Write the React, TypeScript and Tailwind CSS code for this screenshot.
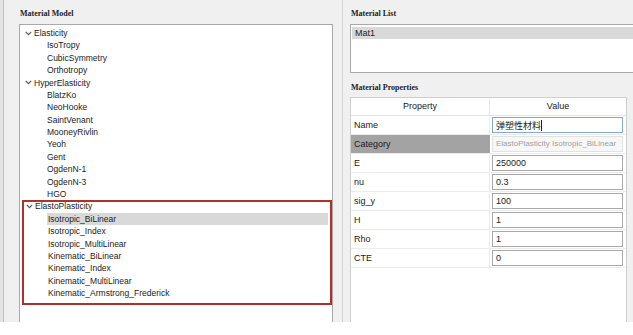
import React from "react";

const tree: { label: string; level: number; open?: boolean }[] = [
  { label: "Elasticity", level: 0, open: true },
  { label: "IsoTropy", level: 1 },
  { label: "CubicSymmetry", level: 1 },
  { label: "Orthotropy", level: 1 },
  { label: "HyperElasticity", level: 0, open: true },
  { label: "BlatzKo", level: 1 },
  { label: "NeoHooke", level: 1 },
  { label: "SaintVenant", level: 1 },
  { label: "MooneyRivlin", level: 1 },
  { label: "Yeoh", level: 1 },
  { label: "Gent", level: 1 },
  { label: "OgdenN-1", level: 1 },
  { label: "OgdenN-3", level: 1 },
  { label: "HGO", level: 1 },
];

const plastic = [
  "Isotropic_BiLinear",
  "Isotropic_Index",
  "Isotropic_MultiLinear",
  "Kinematic_BiLinear",
  "Kinematic_Index",
  "Kinematic_MultiLinear",
  "Kinematic_Armstrong_Frederick",
];

const props: [string, string][] = [
  ["E", "250000"],
  ["nu", "0.3"],
  ["sig_y", "100"],
  ["H", "1"],
  ["Rho", "1"],
  ["CTE", "0"],
];

const sans = { fontFamily: '"Liberation Sans", "Noto Sans CJK SC", sans-serif' };
const serif = { fontFamily: '"Liberation Serif", "Noto Sans CJK SC", serif' };

function Chevron() {
  return (
    <svg width="7" height="5" viewBox="0 0 7 5" className="shrink-0">
      <polyline points="0.8,0.8 3.5,3.6 6.2,0.8" fill="none" stroke="#555" strokeWidth="1.1" />
    </svg>
  );
}

function Row({ label, level, open }: { label: string; level: number; open?: boolean }) {
  if (level === 0) {
    return (
      <div className="h-[12.4px] flex items-center pl-[4px] text-[8.5px] text-[#222] leading-none">
        <span className="w-[9px] flex items-center">{open && <Chevron />}</span>
        <span>{label}</span>
      </div>
    );
  }
  return (
    <div className="h-[12.4px] flex items-center pl-[25px] pr-[2px] text-[8.5px] text-[#222] leading-none">
      <span className="h-full flex-1 flex items-center pl-[1px]">{label}</span>
    </div>
  );
}

export default function App() {
  return (
    <div className="w-[633px] h-[335px] bg-white overflow-hidden" style={sans}>
      <div className="h-[322px] flex bg-[#f0f0f0]">
        {/* left edge strip */}
        <div className="w-[6px] h-full flex shrink-0">
          <div className="w-[3px] bg-[#e4e4e4]" />
          <div className="w-[1px] bg-[#b8c4d4]" />
          <div className="w-[2px] bg-[#eeeeee]" />
        </div>

        {/* left panel */}
        <div className="w-[327px] shrink-0 flex flex-col pl-[13px]">
          <div className="h-[24px] flex items-center pl-[1px] pt-[4px] text-[8px] font-bold text-[#222]" style={serif}>
            Material Model
          </div>
          <div className="flex-1 bg-white border border-b-0 border-[#a9a9a9] pt-[2px] pl-[1px]">
            {tree.map((t) => (
              <Row key={t.label} {...t} />
            ))}
            <div className="border-2 border-[#b0302f] ml-[1px] pb-[3px]">
              <div className="-ml-[2px] -mt-[2px]">
                <div className="h-[12.4px] flex items-center pl-[4px] text-[8.5px] text-[#222] leading-none">
                  <span className="w-[9px] flex items-center"><Chevron /></span>
                  <span>ElastoPlasticity</span>
                </div>
                {plastic.map((p, i) => (
                  <div key={p} className="h-[12.4px] flex items-center pl-[25px] pr-[2px] text-[8.5px] text-[#222] leading-none">
                    <span className={`h-full flex-1 flex items-center pl-[1px] ${i === 0 ? "bg-[#d9d9d9]" : ""}`}>{p}</span>
                  </div>
                ))}
              </div>
            </div>
          </div>
        </div>

        {/* splitter */}
        <div className="w-[17px] h-full flex shrink-0">
          <div className="w-[9px]" />
          <div className="w-[1px] bg-[#d4d4d4]" />
          <div className="w-[7px]" />
        </div>

        {/* right panel */}
        <div className="flex-1 min-w-0 flex flex-col">
          <div className="h-[24px] flex items-center pl-[1px] pt-[4px] text-[8px] font-bold text-[#222]" style={serif}>
            Material List
          </div>
          <div className="h-[49px] bg-white border border-r-0 border-[#a9a9a9] pt-[2px] pl-[1px]">
            <div className="h-[12px] bg-[#d9d9d9] flex items-center pl-[3px] text-[9px] text-[#222] leading-none">Mat1</div>
          </div>
          <div className="h-[24px] flex items-center pl-[1px] pt-[5px] text-[8px] font-bold text-[#222]" style={serif}>
            Material Properties
          </div>
          <div className="flex-1 bg-white border border-[#cfcfcf] border-b-0 mr-[6px] text-[9px] text-[#222] leading-none">
            <div className="flex h-[18px] border-b border-[#e6e6e6]">
              <div className="w-[139px] flex items-center justify-center border-r border-[#e6e6e6]">Property</div>
              <div className="flex-1 flex items-center justify-center">Value</div>
            </div>
            <div className="flex h-[19px] border-b border-[#ececec]">
              <div className="w-[139px] flex items-center pl-[3px] border-r border-[#ececec]">Name</div>
              <div className="flex-1 flex items-center pl-[2px] pr-[3px]">
                <div className="h-[16px] w-full border border-[#86a9c9] flex items-center pl-[3px]" style={{ fontFamily: '"Noto Sans CJK SC", sans-serif' }}>
                  弹塑性材料<span className="w-[1px] h-[11px] bg-[#222]" />
                </div>
              </div>
            </div>
            <div className="flex h-[19px] border-b border-[#ececec]">
              <div className="w-[139px] flex items-center pl-[3px] bg-[#a3a3a3] text-[#1a1a1a]">Category</div>
              <div className="flex-1 flex items-center pl-[2px] pr-[3px]">
                <div className="h-[16px] w-full border border-[#e2e2e2] bg-[#f7f7f7] flex items-center pl-[3px] text-[8px] text-[#a0a0a0] whitespace-nowrap overflow-hidden">
                  ElastoPlasticity Isotropic_BiLinear
                </div>
              </div>
            </div>
            {props.map(([k, v]) => (
              <div key={k} className="flex h-[19px] border-b border-[#ececec]">
                <div className="w-[139px] flex items-center pl-[3px] border-r border-[#ececec]">{k}</div>
                <div className="flex-1 flex items-center pl-[2px] pr-[3px]">
                  <div className="h-[16px] w-full border border-[#a9a9a9] flex items-center pl-[3px]">{v}</div>
                </div>
              </div>
            ))}
          </div>
        </div>
      </div>
    </div>
  );
}
